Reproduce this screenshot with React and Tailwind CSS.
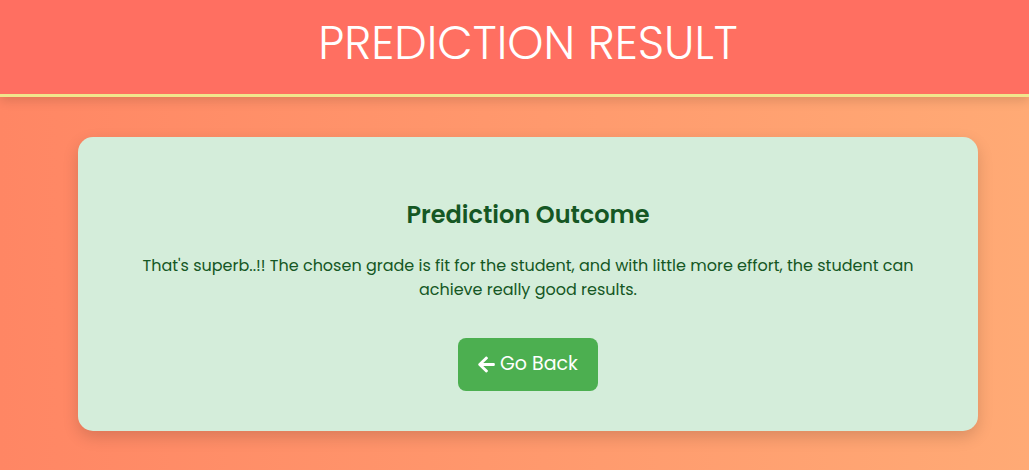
import React from "react";
import { FaArrowLeft } from "react-icons/fa";

export default function App() {
  return (
    <div
      className="min-h-[470px] w-full bg-[linear-gradient(to_right,#ff8664,#ffaa75)]"
      style={{ fontFamily: "Poppins, Inter, 'Open Sans', sans-serif" }}
    >
      <header className="h-[97px] bg-[#ff6f61] border-b-[3px] border-[#f0e68c] shadow-[0_4px_10px_rgba(0,0,0,0.12)] flex items-center justify-center">
        <h1 className="text-white text-[46px] font-light leading-none -mt-[9px] ml-[27px]">
          PREDICTION RESULT
        </h1>
      </header>
      <main className="pt-[40px] flex">
        <div className="ml-[78px] w-[900px] bg-[#d4edda] rounded-[15px] shadow-[0_6px_16px_rgba(0,0,0,0.15)] px-[40px] pt-[62px] pb-[40px] flex flex-col items-center text-center text-[#155724]">
          <h2 className="text-[24px] font-semibold leading-[32px]">Prediction Outcome</h2>
          <p className="mt-[23px] text-[16px] leading-[24px] px-[20px]">
            That's superb..!! The chosen grade is fit for the student, and with little more effort, the student can achieve really good results.
          </p>
          <button className="mt-[36px] w-[140px] h-[53px] bg-[#4caf50] text-white rounded-[8px] text-[19px] flex items-center justify-center gap-[5px]">
            <FaArrowLeft className="w-[17px] h-[19px]" />
            <span>Go Back</span>
          </button>
        </div>
      </main>
    </div>
  );
}
